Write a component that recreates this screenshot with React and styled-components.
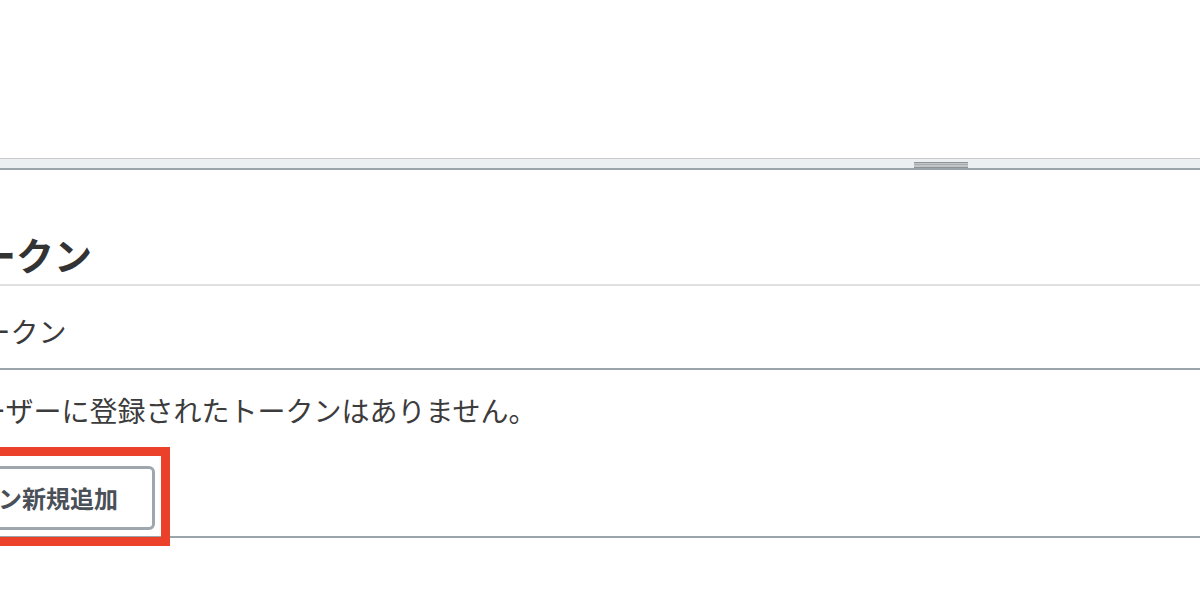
import React from "react";
import styled, { createGlobalStyle } from "styled-components";

const GlobalStyle = createGlobalStyle`
  html, body {
    margin: 0;
    padding: 0;
    background: #ffffff;
    overflow: hidden;
  }
  body {
    font-family: "Noto Sans CJK JP", "Noto Sans", sans-serif;
    color: #333333;
  }
`;

const Page = styled.div`
  width: 1200px;
  height: 592px;
  overflow: hidden;
`;

const TopArea = styled.div`
  height: 158px;
  background: #ffffff;
`;

const Splitter = styled.div`
  display: flex;
  align-items: flex-end;
  height: 9px;
  padding-left: 914px;
  background: #eceff1;
  border-top: 1px solid #cacaca;
  border-bottom: 2px solid #9ba5ac;
`;

const Grip = styled.div`
  width: 54px;
  height: 6px;
  background: linear-gradient(
    to bottom,
    #8e9395 0 1px,
    #c3c6c8 1px 2px,
    #a9adaf 2px 3px,
    #c3c6c8 3px 5px,
    #8e9395 5px 6px
  );
`;

const Content = styled.div`
  margin-left: -220px;
`;

const Heading = styled.h2`
  margin: 0;
  padding: 62px 0 8px ${(p) => p.$indent}px;
  font-size: 38px;
  line-height: 44px;
  font-weight: 700;
  color: #333333;
  white-space: nowrap;
  border-bottom: 2px solid #e0e0e0;
`;

const LabelRow = styled.div`
  padding: 27px 0 19px ${(p) => p.$indent}px;
  font-size: 28px;
  line-height: 36px;
  color: #3a3a3a;
  white-space: nowrap;
  border-bottom: 2px solid #9ba5ac;
`;

const Section = styled.div`
  padding: 22px 0 6px;
  border-bottom: 2px solid #9ba5ac;
`;

const Message = styled.p`
  margin: 0 0 38px;
  padding-left: ${(p) => p.$indent}px;
  font-size: 28px;
  line-height: 36px;
  color: #3c3c3c;
  white-space: nowrap;
`;

const ButtonWrap = styled.div`
  position: relative;
  display: inline-flex;
  margin-left: ${(p) => p.$indent}px;
`;

const Button = styled.button`
  height: 64px;
  padding: 0 34px 2px;
  background: #ffffff;
  border: 3px solid #9ea7ae;
  border-radius: 6px;
  font-family: "Noto Sans CJK JP", "Noto Sans", sans-serif;
  font-size: 24px;
  font-weight: 700;
  color: #4a5057;
  white-space: nowrap;
  cursor: pointer;
`;

const Highlight = styled.div`
  position: absolute;
  top: -19px;
  right: -15px;
  bottom: -16px;
  left: -15px;
  border: 9px solid #eb4029;
  pointer-events: none;
`;

export default function App() {
  return (
    <Page>
      <GlobalStyle />
      <TopArea />
      <Splitter>
        <Grip />
      </Splitter>
      <Content>
        <Heading $indent={10}>アクセストークン</Heading>
        <LabelRow $indent={64}>アクセストークン</LabelRow>
        <Section>
          <Message $indent={114}>このユーザーに登録されたトークンはありません。</Message>
          <ButtonWrap $indent={109}>
            <Button>トークン新規追加</Button>
            <Highlight />
          </ButtonWrap>
        </Section>
      </Content>
    </Page>
  );
}
